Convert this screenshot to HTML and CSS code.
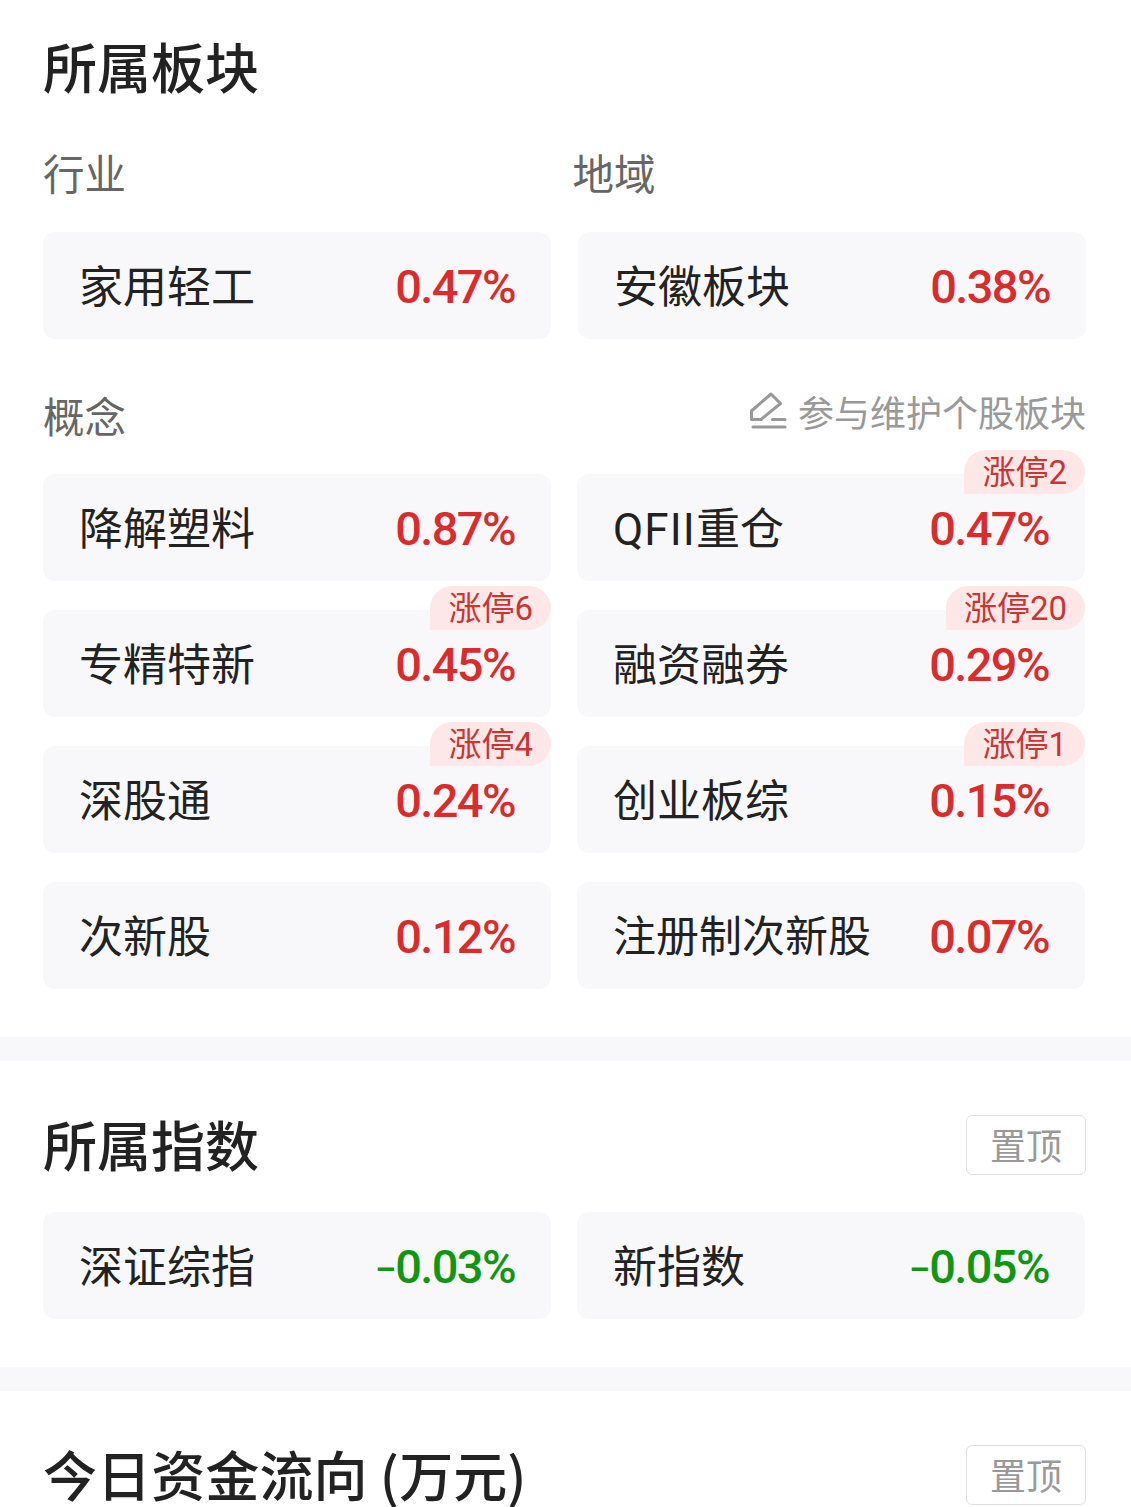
FILE: index.html
```html
<!DOCTYPE html>
<html lang="zh-CN">
<head>
<meta charset="utf-8">
<title>所属板块</title>
<link rel="stylesheet" href="styles.css">
</head>
<body>
<main class="page">
  <section class="section sectors">
    <h2 class="title">所属板块</h2>
    <div class="labels"><h3 class="label">行业</h3><h3 class="label">地域</h3></div>
    <div class="grid grid-top">
      <div class="card"><span class="name">家用轻工</span><span class="rate up">0.47%</span></div>
      <div class="card"><span class="name">安徽板块</span><span class="rate up">0.38%</span></div>
    </div>
    <div class="concept-head">
      <h3 class="label">概念</h3>
      <a class="edit">
        <svg class="edit-icon" viewBox="0 0 38 38" fill="none" stroke="currentColor" stroke-width="3" stroke-linecap="round" stroke-linejoin="round"><path d="M2.5 20 22 3 31.5 12.5 12 28.5H2.5ZM23.5 28.5H36M4 36H36"/></svg>
        <span>参与维护个股板块</span>
      </a>
    </div>
    <div class="grid">
      <div class="card"><span class="name">降解塑料</span><span class="rate up">0.87%</span></div>
      <div class="card"><span class="name"><span class="latin">QFII</span>重仓</span><span class="rate up">0.47%</span><span class="badge">涨停2</span></div>
      <div class="card"><span class="name">专精特新</span><span class="rate up">0.45%</span><span class="badge">涨停6</span></div>
      <div class="card"><span class="name">融资融券</span><span class="rate up">0.29%</span><span class="badge">涨停20</span></div>
      <div class="card"><span class="name">深股通</span><span class="rate up">0.24%</span><span class="badge">涨停4</span></div>
      <div class="card"><span class="name">创业板综</span><span class="rate up">0.15%</span><span class="badge">涨停1</span></div>
      <div class="card"><span class="name">次新股</span><span class="rate up">0.12%</span></div>
      <div class="card"><span class="name name-long">注册制次新股</span><span class="rate up">0.07%</span></div>
    </div>
  </section>
  <section class="section indexes">
    <header class="section-head"><h2 class="title">所属指数</h2><button class="pin">置顶</button></header>
    <div class="grid">
      <div class="card"><span class="name">深证综指</span><span class="rate down"><span class="minus">−</span>0.03%</span></div>
      <div class="card"><span class="name">新指数</span><span class="rate down"><span class="minus">−</span>0.05%</span></div>
    </div>
  </section>
  <section class="section flow">
    <header class="section-head"><h2 class="title title-wide">今日资金流向 (万元)</h2><button class="pin">置顶</button></header>
  </section>
</main>
</body>
</html>
```
FILE: styles.css
```css
* { box-sizing: border-box; }
body {
  margin: 0;
  background: #fff;
  color: #222;
  font-family: Roboto, "Noto Sans CJK SC", sans-serif;
}
.page { height: 1507px; overflow: hidden; }
.section { padding: 0 43px; border-bottom: 24px solid #f8f8fb; }
.sectors { height: 1061px; padding-top: 37px; }
.indexes { height: 330px; padding-top: 54px; }
.flow { height: 116px; padding-top: 54px; border-bottom: 0; }
.title { margin: 0; font-family: "Noto Sans CJK SC", sans-serif; font-size: 54px; line-height: 58px; font-weight: 500; white-space: nowrap; }
.title-wide { letter-spacing: .1px; }
.label { margin: 0; font-family: "Noto Sans CJK SC", sans-serif; font-size: 41.5px; line-height: 48px; font-weight: 400; color: #666; }
.labels { display: grid; grid-template-columns: 529.5px 1fr; margin-top: 53px; }
.grid { display: grid; grid-template-columns: 508px 508px; gap: 29px 26px; }
.grid-top { column-gap: 27px; margin-top: 36px; }
.card {
  position: relative;
  display: flex;
  align-items: center;
  justify-content: space-between;
  height: 107px;
  padding: 0 36px;
  border-radius: 12px;
  background: #f8f8fb;
}
.name { padding-top: 5px; font-size: 44px; line-height: 60px; }
.name-long { padding-top: 3px; font-size: 43px; }
.latin { letter-spacing: 1.1px; }
.rate { padding-top: 2px; font-size: 47px; line-height: 60px; font-weight: 500; letter-spacing: -1.6px; }
.minus { font-size: 39px; line-height: 1; }
.up { color: #d92d2d; }
.down { color: #109610; }
.badge {
  position: absolute;
  top: -24px;
  right: 0;
  height: 44px;
  padding: 0 18px;
  border-radius: 22px 22px 22px 0;
  background: #fde8e7;
  color: #c93535;
  font-size: 33px;
  line-height: 46px;
}
.concept-head { display: flex; justify-content: space-between; height: 135px; padding-top: 52px; margin-right: 2px; }
.edit { display: flex; align-items: flex-start; gap: 11px; color: #999; font-size: 36px; line-height: 48px; }
.edit-icon { width: 38px; height: 38px; }
.section-head { display: flex; align-items: flex-start; justify-content: space-between; height: 97px; margin-right: 2px; }
.pin {
  width: 120px;
  height: 60px;
  padding: 0 0 2px;
  border: 1px solid #e0e0e0;
  border-radius: 6px;
  background: #fff;
  color: #999;
  font: 36px/56px "Noto Sans CJK SC", sans-serif;
}
```
